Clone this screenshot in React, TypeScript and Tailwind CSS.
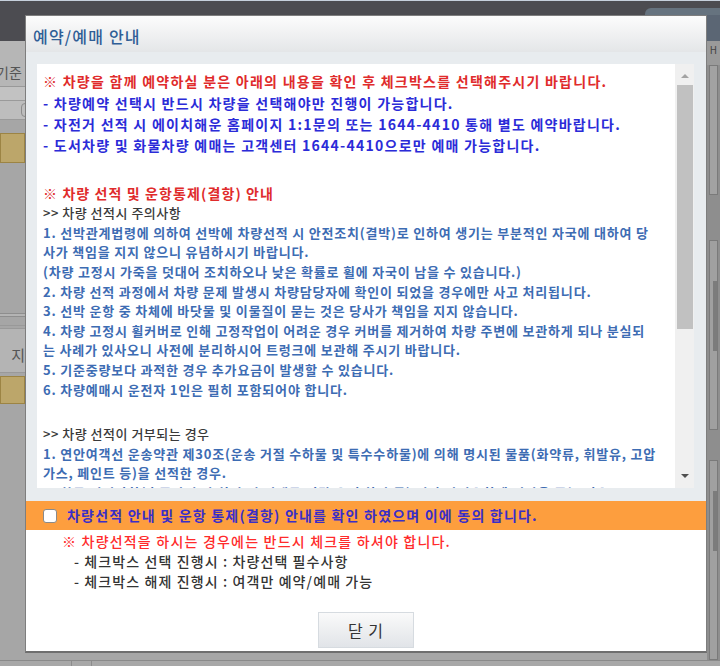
import React from "react";

const notice = [
  "- 차량예약 선택시 반드시 차량을 선택해야만 진행이 가능합니다.",
  "- 자전거 선적 시 에이치해운 홈페이지 1:1문의 또는 1644-4410 통해 별도 예약바랍니다.",
  "- 도서차량 및 화물차량 예매는 고객센터 1644-4410으로만 예매 가능합니다.",
];

const caution = [
  "1. 선박관계법령에 의하여 선박에 차량선적 시 안전조치(결박)로 인하여 생기는 부분적인 자국에 대하여 당",
  "사가 책임을 지지 않으니 유념하시기 바랍니다.",
  "(차량 고정시 가죽을 덧대어 조치하오나 낮은 확률로 휠에 자국이 남을 수 있습니다.)",
  "2. 차량 선적 과정에서 차량 문제 발생시 차량담당자에 확인이 되었을 경우에만 사고 처리됩니다.",
  "3. 선박 운항 중 차체에 바닷물 및 이물질이 묻는 것은 당사가 책임을 지지 않습니다.",
  "4. 차량 고정시 휠커버로 인해 고정작업이 어려운 경우 커버를 제거하여 차량 주변에 보관하게 되나 분실되",
  "는 사례가 있사오니 사전에 분리하시어 트렁크에 보관해 주시기 바랍니다.",
  "5. 기준중량보다 과적한 경우 추가요금이 발생할 수 있습니다.",
  "6. 차량예매시 운전자 1인은 필히 포함되어야 합니다.",
];

const refused = [
  "1. 연안여객선 운송약관 제30조(운송 거절 수하물 및 특수수하물)에 의해 명시된 물품(화약류, 휘발유, 고압",
  "가스, 페인트 등)을 선적한 경우.",
  "2. 화물 선적사항(총중량 초과 차량 및 적재물 이탈 우려 차량 등) 선박 안전운항에 지장을 주는 경우.",
];

function LeftStrip() {
  return (
    <div className="flex w-[25px] flex-col bg-[#a6a6a6]">
      <div className="h-[26px] bg-[#4c4c51]" />
      <div className="flex h-[46px] items-end overflow-hidden border-b border-[#999] bg-[#b6b6b6] pb-[3px]">
        <span className="-ml-[4px] whitespace-nowrap text-[14px] text-[#555]">기준</span>
      </div>
      <div className="h-[13px] bg-[#c2c2c2]" />
      <div className="flex h-[20px] justify-end border-y border-[#9a9a9a] bg-[#bdbdbd]">
        <div className="mr-[-4px] mt-[2px] h-[14px] w-[8px] rounded-sm border border-[#8c8c8c]" />
      </div>
      <div className="h-[13px]" />
      <div className="h-[30px] border border-[#9c8444] bg-[#bca66a]" />
      <div className="h-[150px]" />
      <div className="h-[4px] border-y border-[#8e8e8e] bg-[#b4b4b4]" />
      <div className="h-[8px]" />
      <div className="h-[3px] border-t border-[#999]" />
      <div className="flex h-[45px] items-end justify-end overflow-hidden border-y border-[#999] bg-[#b4b4b4] pb-[6px]">
        <span className="text-[15px] text-[#555]">지</span>
      </div>
      <div className="h-[3px]" />
      <div className="h-[28px] border border-[#9c8444] bg-[#bca66a]" />
      <div className="flex-1" />
    </div>
  );
}

function RightStrip() {
  return (
    <div className="flex w-[13px] flex-col bg-[#8e8e8e]">
      <div className="h-[26px] bg-[#5b6674]" />
      <div className="flex h-[24px] justify-center bg-[#9a9a9a] pt-[4px]">
        <span className="text-[10px] leading-none text-[#444]">H</span>
      </div>
      <div className="mx-[2px] h-[130px] border border-[#7a7a7a] bg-[#a2a2a2]" />
      <div className="h-[45px]" />
      <div className="mx-[2px] flex h-[190px] flex-col border border-[#7a7a7a] bg-[#a0a0a0] pt-[40px]">
        <div className="ml-[3px] h-[70px] bg-[#7c7c7c]" />
      </div>
      <div className="h-[30px]" />
      <div className="mx-[2px] flex h-[200px] flex-col border border-[#7a7a7a] bg-[#a0a0a0] pt-[30px]">
        <div className="ml-[3px] h-[60px] bg-[#7c7c7c]" />
      </div>
      <div className="flex-1" />
    </div>
  );
}

function Scrollbar() {
  return (
    <div className="flex w-[19px] flex-col items-center bg-[#f0f0f0]">
      <div className="flex h-[21px] items-center justify-center pt-[2px]">
        <div className="h-0 w-0 border-x-[4px] border-b-[4px] border-x-transparent border-b-[#a3a3a3]" />
      </div>
      <div className="h-[244px] w-[16px] bg-[#c1c1c1]" />
      <div className="flex-1" />
      <div className="flex h-[22px] items-center justify-center pb-[3px]">
        <div className="h-0 w-0 border-x-[4px] border-t-[4px] border-x-transparent border-t-[#505050]" />
      </div>
    </div>
  );
}

function Modal() {
  return (
    <div className="flex h-[638px] w-[682px] flex-col border border-b-2 border-[#7e7e7e] border-b-[#6e6e6e] bg-white">
      <div className="flex h-[36px] items-center bg-gradient-to-b from-[#fcfcfc] to-[#e4e6e8] pl-[7px] pt-[3px]">
        <h1 className="text-[16px] font-medium tracking-[1.2px] text-[#2f5e96]">예약/예매 안내</h1>
      </div>
      <div className="flex bg-[#e8ecef] px-[11px] pt-[12px] pb-[13px] pr-[12px]">
        <div className="flex h-[424px] flex-1 overflow-hidden">
          <div className="flex-1 overflow-hidden whitespace-nowrap bg-white pl-[6px] pt-[7px]">
            <div className="text-[14px] font-bold leading-[21.3px] tracking-[1.25px]">
              <p className="text-[#e02b2b]">
                ※ 차량을 함께 예약하실 분은 아래의 내용을 확인 후 체크박스를 선택해주시기 바랍니다.
              </p>
              {notice.map((line) => (
                <p key={line} className="text-[#2b2bd8]">
                  {line}
                </p>
              ))}
            </div>
            <div className="mt-[27px] leading-[19.6px]">
              <p className="text-[14px] font-bold tracking-[1.1px] text-[#e02b2b]">
                ※ 차량 선적 및 운항통제(결항) 안내
              </p>
              <p className="text-[13px] font-medium tracking-[0.5px] text-[#3a3a3a]">&gt;&gt; 차량 선적시 주의사항</p>
              {caution.map((line) => (
                <p key={line} className="text-[13px] font-bold tracking-[0.8px] text-[#3d6cb3]">
                  {line}
                </p>
              ))}
            </div>
            <div className="mt-[25px] leading-[19.6px]">
              <p className="text-[13px] font-medium tracking-[0.5px] text-[#3a3a3a]">&gt;&gt; 차량 선적이 거부되는 경우</p>
              {refused.map((line) => (
                <p key={line} className="text-[13px] font-bold tracking-[0.8px] text-[#3d6cb3]">
                  {line}
                </p>
              ))}
            </div>
          </div>
          <Scrollbar />
        </div>
      </div>
      <label className="flex h-[29px] items-center bg-[#fd9e3e] pl-[17px]">
        <span className="h-[14px] w-[14px] rounded-[3px] border border-[#8a8a8a] bg-white" />
        <span className="ml-[10px] text-[14px] font-bold tracking-[1.2px] text-[#3a2ec8]">
          차량선적 안내 및 운항 통제(결항) 안내를 확인 하였으며 이에 동의 합니다.
        </span>
      </label>
      <div className="flex flex-1 flex-col pt-[1px]">
        <p className="pl-[36px] text-[14px] font-medium leading-[20px] tracking-[1.2px] text-[#ff2b2b]">
          ※ 차량선적을 하시는 경우에는 반드시 체크를 하셔야 합니다.
        </p>
        <p className="pl-[48px] text-[14px] font-medium leading-[20px] tracking-[1.1px] text-[#333]">
          - 체크박스 선택 진행시 : 차량선택 필수사항
        </p>
        <p className="pl-[48px] text-[14px] font-medium leading-[20px] tracking-[1.1px] text-[#333]">
          - 체크박스 해제 진행시 : 여객만 예약/예매 가능
        </p>
        <div className="flex justify-center pt-[21px]">
          <button className="h-[36px] w-[96px] border border-[#d6dbe0] bg-gradient-to-b from-[#fafafa] to-[#e1e4e8] text-[16px] tracking-[1px] text-[#333]">
            닫 기
          </button>
        </div>
      </div>
    </div>
  );
}

export default function App() {
  return (
    <div className="flex h-[666px] w-[720px] flex-col overflow-hidden bg-[#a6a6a6] font-['Noto_Sans_CJK_KR',sans-serif]">
      <div className="h-[3px] bg-[#c6d0dc]" />
      <div className="flex h-[14px] justify-end bg-[#4c4c51]">
        <div className="mt-[7px] h-[7px] w-[75px] rounded-tl-[6px] bg-[#66737f]" />
      </div>
      <div className="flex">
        <LeftStrip />
        <Modal />
        <RightStrip />
      </div>
      <div className="flex h-[11px] border-t border-[#8a8a8a] bg-[#a8a8a8]">
        <div className="w-[72px] border-r border-[#8c8c8c]" />
        <div className="w-[20px] border-r border-[#8c8c8c]" />
      </div>
    </div>
  );
}
